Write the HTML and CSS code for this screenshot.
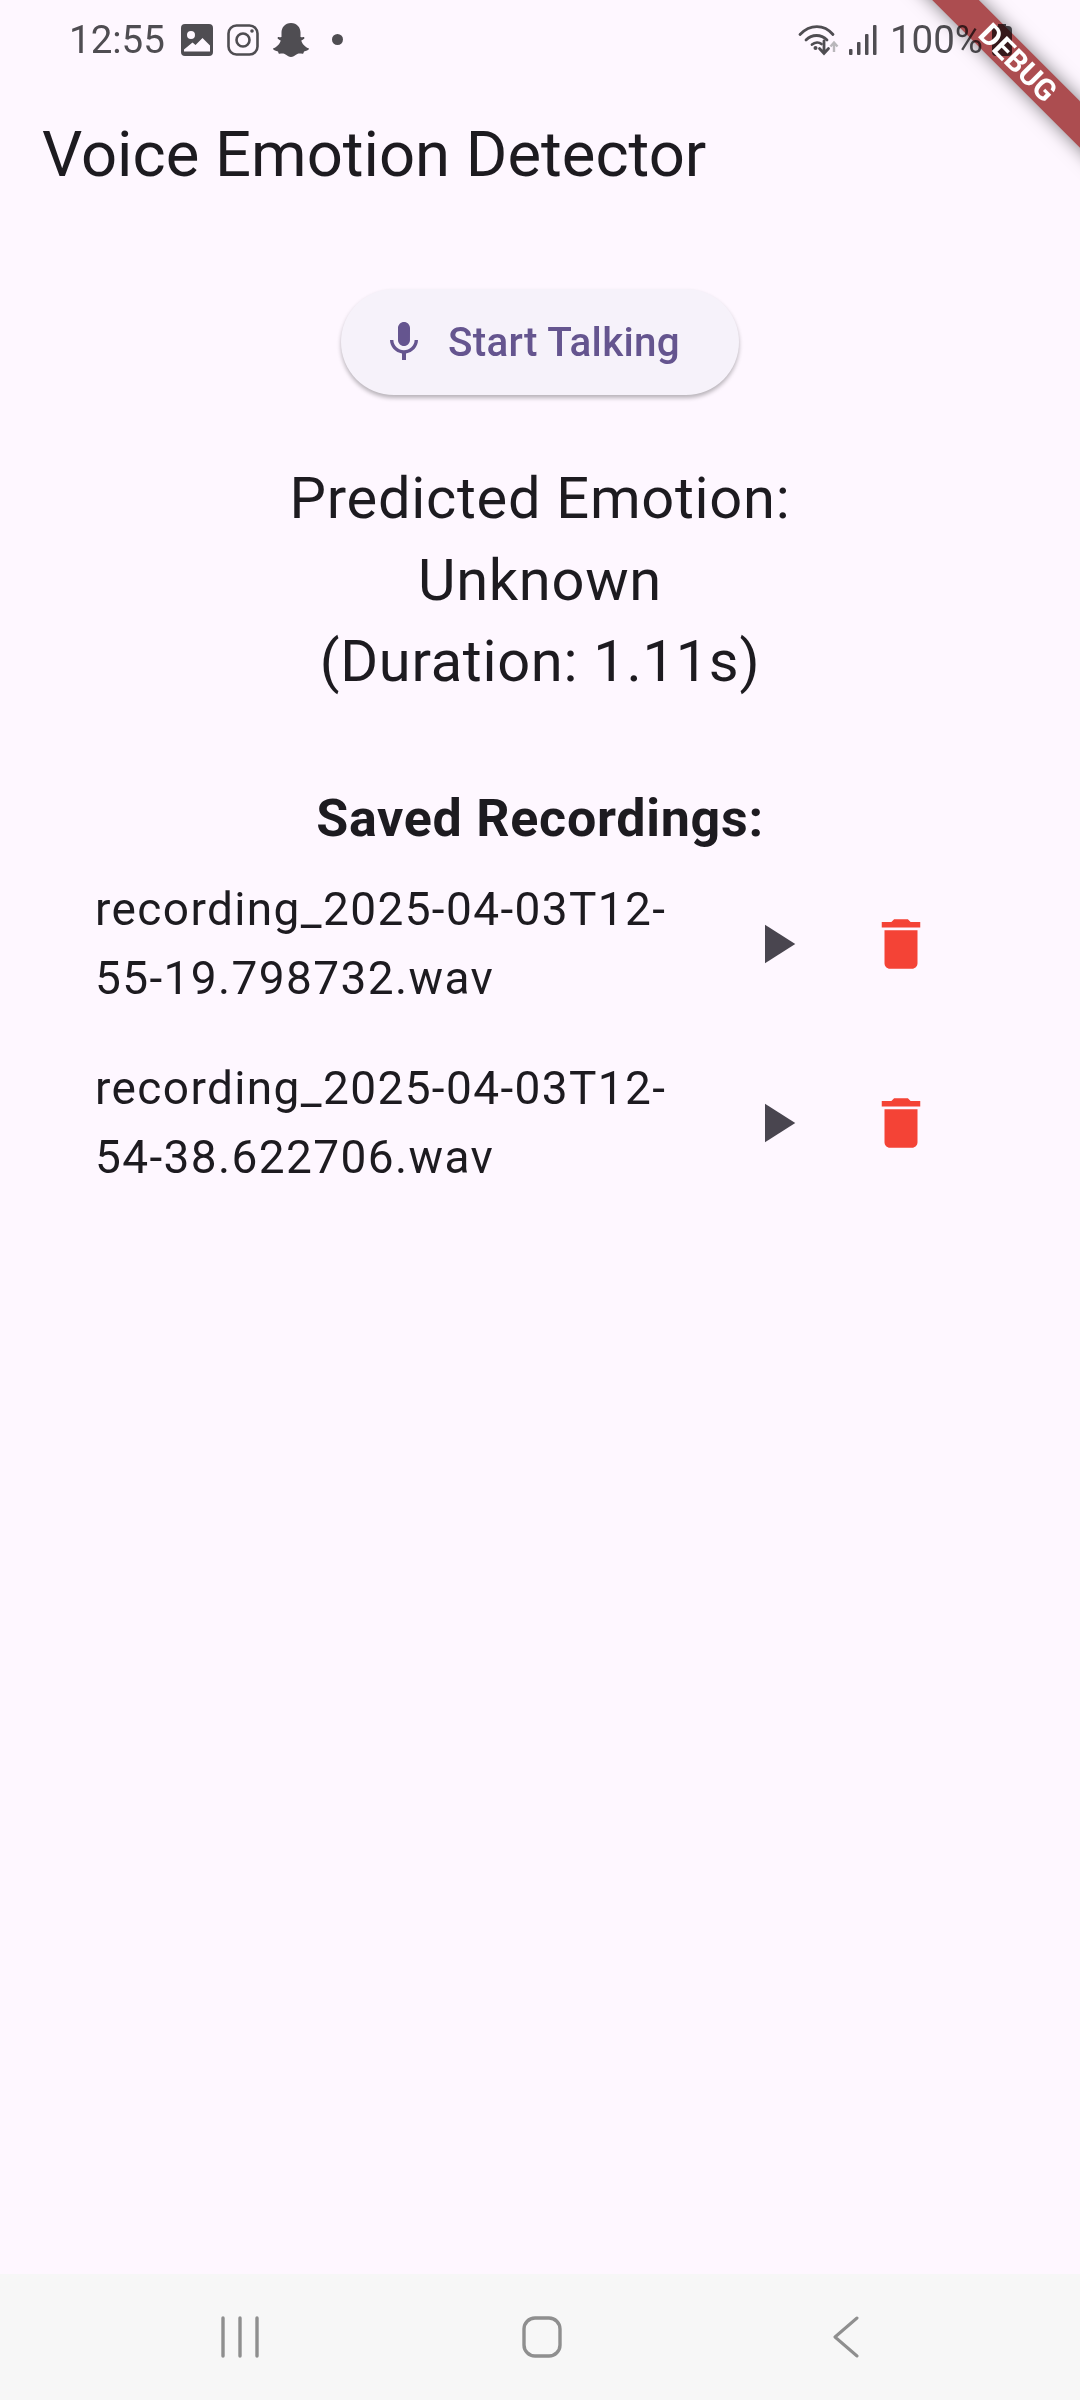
FILE: index.html
```html
<!DOCTYPE html>
<html lang="en">
  <head>
    <meta charset="UTF-8" />
    <meta name="viewport" content="width=device-width, initial-scale=1.0" />
    <title>Voice Emotion Detector</title>
    <link rel="stylesheet" href="styles.css">
  </head>
  <body>
    <div class="screen">
      <!-- status bar -->
      <div class="status">
        <div class="status-left">
          <span class="time">12:55</span>
          <svg class="note-icon" viewBox="0 0 32 32"><path fill-rule="evenodd" d="M4 0h24a4 4 0 0 1 4 4v24a4 4 0 0 1-4 4H4a4 4 0 0 1-4-4V4a4 4 0 0 1 4-4zM10 7a4 4 0 1 0 0 8 4 4 0 0 0 0-8zM3 27.500h26v-6l-7.500-7.500-7 7-3-2.500-8.500 7z"/></svg>
          <svg class="note-icon" viewBox="0 0 32 32"><rect x="1.500" y="1.500" width="29" height="29" rx="8" fill="none" stroke="#4f4d52" stroke-width="2.600"/><circle cx="16" cy="16" r="6.500" fill="none" stroke="#4f4d52" stroke-width="2.600"/><circle cx="25" cy="7" r="1.800"/></svg>
          <svg class="snap-icon" viewBox="0 0 36 34"><path d="M18 0c6 0 9.500 4.500 9.500 9.500v4.500c1.500.6 3-.8 3.800.4.700 1.200-1.300 2.200-3 3 .7 3.500 4 6.800 7.700 8 .5 1.500-2.700 2.600-5 3-.5 1.500-.6 2.300-1.500 2.300-3-.4-4.500-.5-6.500 1.100-1.500 1.200-3 2.200-5 2.200s-3.500-1-5-2.200c-2-1.600-3.500-1.500-6.500-1.100-.9 0-1-.8-1.500-2.300-2.300-.4-5.500-1.500-5-3 3.700-1.200 7-4.500 7.700-8-1.700-.8-3.700-1.800-3-3 .8-1.200 2.300.2 3.800-.4V9.500C8.500 4.500 12 0 18 0z"/></svg>
          <span class="dot"></span>
        </div>
        <div class="status-right">
          <svg class="wifi-icon" viewBox="0 0 42 32">
            <g fill="none" stroke="#4f4d52" stroke-width="2.800" stroke-linecap="round">
              <path d="M2 10.500C12 0 26 0 35 10.500"/>
              <path d="M8 16c6-6 15-6 21 0"/>
              <path d="M14 20.500c3-2.500 7-2.500 9.500-.5"/>
              <path d="M26 17v12M21.500 24.500l4.500 5 4.500-5"/>
            </g>
            <circle cx="17.500" cy="24" r="2" fill="#4f4d52"/>
            <path d="M36 28V19M32.500 22.500l3.500-4 3.500 4" fill="none" stroke="#b9b7bb" stroke-width="2.400"/>
          </svg>
          <svg class="signal-icon" viewBox="0 0 28 30">
            <rect x="0" y="24" width="3.500" height="6" rx="1"/>
            <rect x="8" y="17" width="3.500" height="13" rx="1"/>
            <rect x="16" y="9" width="3.500" height="21" rx="1"/>
            <rect x="24" y="0" width="3.500" height="30" rx="1"/>
          </svg>
          <span class="battery-text">100%</span>
          <svg class="battery-icon" viewBox="0 0 20 32"><path d="M6 0h8v2h2a4 4 0 0 1 4 4v22a4 4 0 0 1-4 4H4a4 4 0 0 1-4-4V6a4 4 0 0 1 4-4h2z"/></svg>
        </div>
      </div>

      <!-- app bar -->
      <header class="appbar">Voice Emotion Detector</header>

      <main class="content">
        <button type="button" class="talk-btn">
          <svg viewBox="0 0 24 24"><path d="M12 14c1.660 0 2.990-1.340 2.990-3L15 5c0-1.660-1.340-3-3-3S9 3.340 9 5v6c0 1.660 1.340 3 3 3zm5.300-3c0 3-2.540 5.100-5.300 5.100S6.700 14 6.700 11H5c0 3.410 2.720 6.230 6 6.720V21h2v-3.280c3.280-.48 6-3.300 6-6.720h-1.700z"/></svg>
          <span>Start Talking</span>
        </button>

        <p class="result">Predicted Emotion:<br />Unknown<br />(Duration: 1.11s)</p>

        <h2 class="saved-title">Saved Recordings:</h2>

        <ul class="rec-list">
          <li class="rec-row">
            <span class="rec-name">recording_2025-04-03T12-<br />55-19.798732.wav</span>
            <svg class="play-icon" viewBox="0 0 24 24"><path d="M8 5v14l11-7z"/></svg>
            <svg class="del-icon" viewBox="0 0 24 24"><path d="M6 19c0 1.100.9 2 2 2h8c1.100 0 2-.9 2-2V7H6v12zM19 4h-3.500l-1-1h-5l-1 1H5v2h14V4z"/></svg>
          </li>
          <li class="rec-row">
            <span class="rec-name">recording_2025-04-03T12-<br />54-38.622706.wav</span>
            <svg class="play-icon" viewBox="0 0 24 24"><path d="M8 5v14l11-7z"/></svg>
            <svg class="del-icon" viewBox="0 0 24 24"><path d="M6 19c0 1.100.9 2 2 2h8c1.100 0 2-.9 2-2V7H6v12zM19 4h-3.500l-1-1h-5l-1 1H5v2h14V4z"/></svg>
          </li>
        </ul>
      </main>

      <!-- bottom nav -->
      <nav class="navbar">
        <svg class="nav-icon" viewBox="0 0 40 42"><path d="M3 2v38M20 2v38M37 2v38" fill="none" stroke="#8f8f8f" stroke-width="3.400" stroke-linecap="round"/></svg>
        <svg class="nav-icon" viewBox="0 0 40 42"><rect x="2" y="2" width="36" height="38" rx="11" fill="none" stroke="#8f8f8f" stroke-width="3.400"/></svg>
        <svg class="nav-icon" viewBox="0 0 40 42"><path d="M33 2L11 21l22 19" fill="none" stroke="#8f8f8f" stroke-width="3" stroke-linecap="round" stroke-linejoin="round"/></svg>
      </nav>

      <!-- flutter debug banner: band and label are siblings so the band can blend with the status bar -->
      <div class="debug-ribbon debug-band"></div>
      <div class="debug-ribbon debug-label">DEBUG</div>
    </div>
  </body>
</html>
```

FILE: styles.css
```css
* {
  box-sizing: border-box;
}

body {
  margin: 0;
  background-color: #fef7ff;
  font-family: Roboto, "Noto Sans", sans-serif;
  color: #1d1b20;
}

.screen {
  position: relative;
  display: flex;
  flex-direction: column;
  width: 1080px;
  height: 2400px;
  overflow: hidden;
}

/* status bar */
.status {
  display: flex;
  justify-content: space-between;
  align-items: center;
  height: 77px;
  padding: 2px 68px 0 69px;
  color: #4f4d52;
  fill: #4f4d52;
}

.status-left,
.status-right {
  display: flex;
  align-items: center;
}

.time {
  width: 93px;
  margin-right: 19px;
  font-size: 38.500px;
}

.note-icon {
  width: 32px;
  height: 32px;
  margin-right: 14px;
}

.snap-icon {
  width: 36px;
  height: 34px;
}

.dot {
  width: 11px;
  height: 11px;
  margin-left: 23px;
  border-radius: 50%;
  background-color: #4f4d52;
}

.wifi-icon {
  width: 42px;
  height: 32px;
  margin-right: 9px;
}

.signal-icon {
  width: 28px;
  height: 30px;
  margin-right: 13px;
}

.battery-text {
  font-size: 38.500px;
}

.battery-icon {
  width: 20px;
  height: 32px;
  margin-left: 9px;
}

/* app bar */
.appbar {
  height: 154px;
  padding-left: 42px;
  font-size: 63.400px;
  line-height: 154px;
}

.content {
  flex: 1;
  display: flex;
  flex-direction: column;
  align-items: center;
  padding-top: 58px;
}

.talk-btn {
  display: flex;
  align-items: center;
  width: 398px;
  height: 106px;
  padding: 0 0 0 39px;
  border: none;
  border-radius: 53px;
  background-color: #f6f2fa;
  box-shadow: 0 3px 4px rgba(0, 0, 0, 0.28);
  color: #65558f;
  fill: #65558f;
  font-family: inherit;
  font-size: 40.400px;
  font-weight: 500;
  letter-spacing: 0.290px;
}

.talk-btn svg {
  width: 48px;
  height: 48px;
  margin-right: 20px;
}

.result {
  margin: 63px 0 0;
  font-size: 57.800px;
  letter-spacing: 0.720px;
  line-height: 81.500px;
  text-align: center;
}

.saved-title {
  margin: 81px 0 0;
  font-size: 52px;
  font-weight: 700;
  letter-spacing: 0.720px;
  line-height: 70px;
  text-align: center;
}

.rec-list {
  align-self: stretch;
  margin: 1px 0 0;
  padding: 0 0 0 95px;
  list-style: none;
}

.rec-row {
  display: flex;
  align-items: center;
  height: 179px;
}

.rec-name {
  width: 648px;
  font-size: 46px;
  letter-spacing: 1.380px;
  line-height: 69px;
}

.play-icon {
  width: 66px;
  height: 66px;
  fill: #49454f;
}

.del-icon {
  width: 66px;
  height: 66px;
  margin-left: 59px;
  fill: #f44336;
}

/* bottom nav */
.navbar {
  display: flex;
  align-items: center;
  gap: 262px;
  height: 126px;
  padding-left: 220px;
  background-color: #f7f7f7;
}

.nav-icon {
  width: 40px;
  height: 42px;
}

/* ribbon */
.debug-ribbon {
  position: absolute;
  top: 46px;
  left: 868px;
  width: 300px;
  height: 33px;
  transform: rotate(45deg);
}

.debug-band {
  background-color: #ad4f50;
  box-shadow: 0 0 18px rgba(0, 0, 0, 0.5);
  mix-blend-mode: multiply;
}

.debug-label {
  color: #fff;
  font-size: 30px;
  font-weight: 700;
  line-height: 33px;
  text-align: center;
}
```
